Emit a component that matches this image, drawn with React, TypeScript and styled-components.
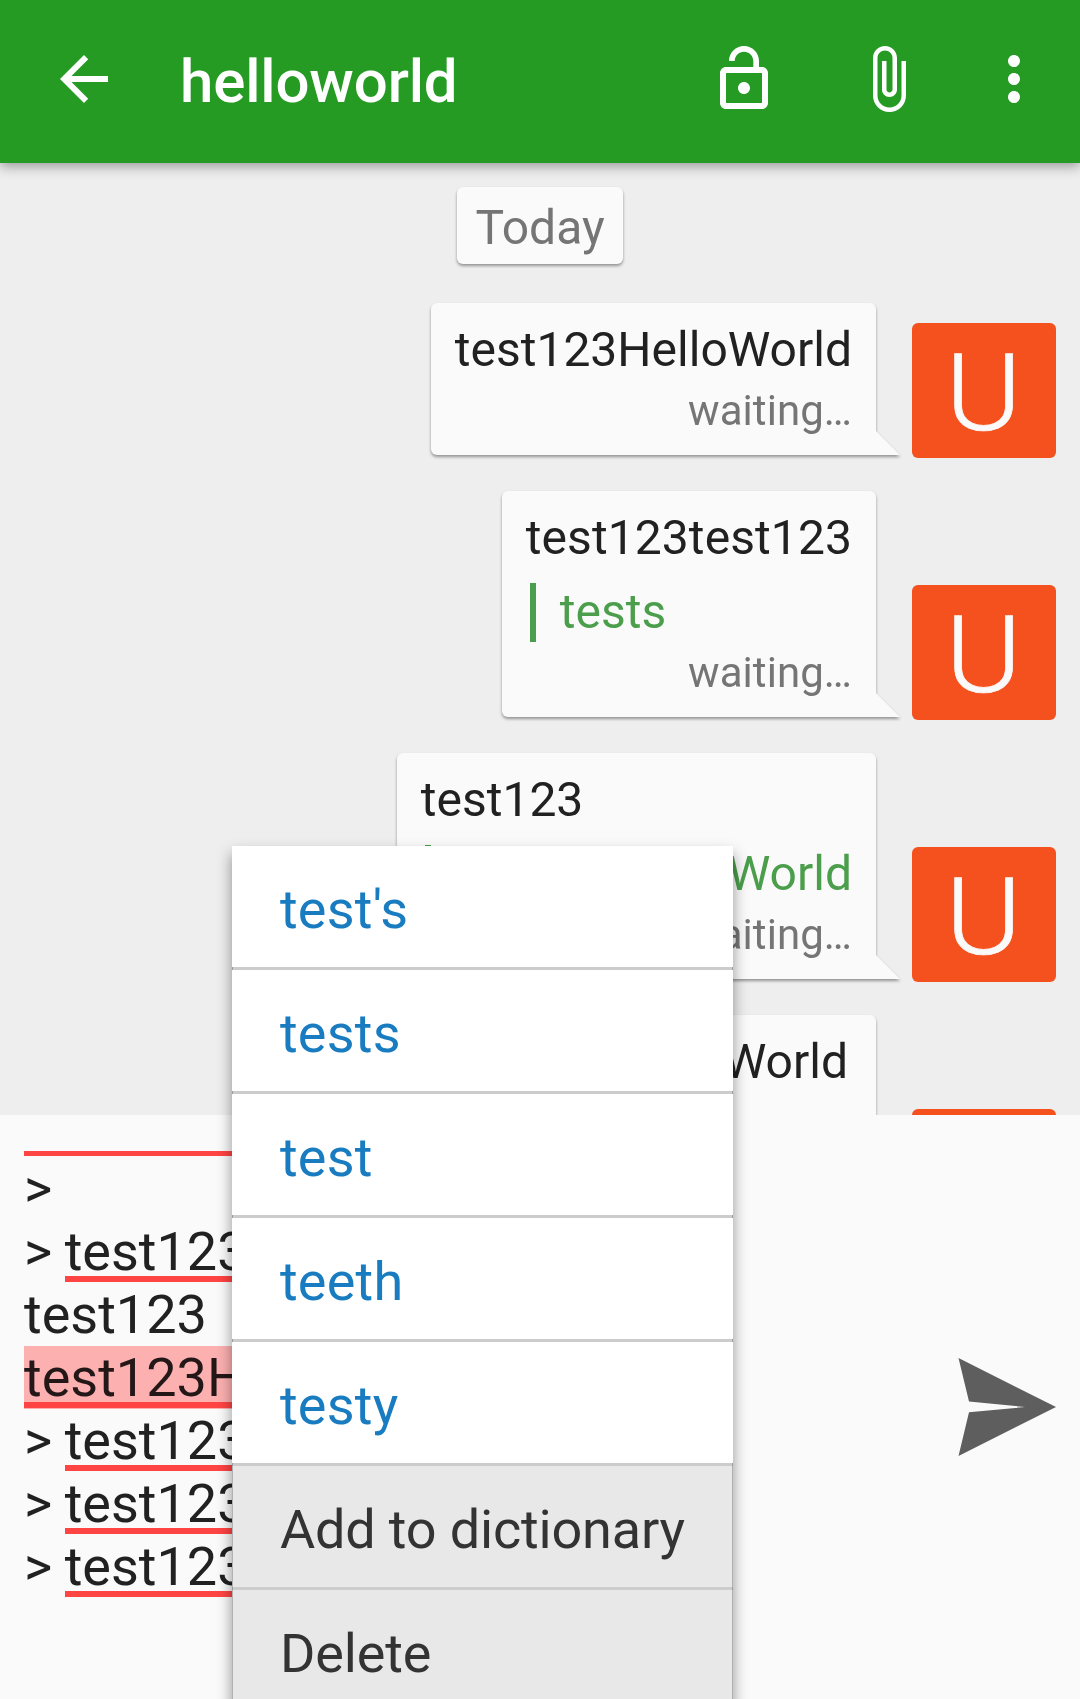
import React from "react";
import styled, { createGlobalStyle } from "styled-components";

const GlobalStyle = createGlobalStyle`
  *, *::before, *::after { box-sizing: border-box; }
  body {
    margin: 0;
    background: #fafafa;
    font-family: Roboto, "Liberation Sans", sans-serif;
  }
`;

const Screen = styled.div`
  position: relative;
  display: flex;
  flex-direction: column;
  width: 1080px;
  height: 1699px;
  overflow: hidden;
`;

const Toolbar = styled.header`
  position: relative;
  z-index: 1;
  flex: none;
  display: flex;
  align-items: center;
  height: 163px;
  padding: 0 30px 5px 48px;
  background: #259b24;
  color: #fff;
  box-shadow: 0 3px 12px rgba(0, 0, 0, 0.38);
`;

const Title = styled.h1`
  flex: 1;
  margin: 0 0 0 60px;
  font-size: 60px;
  line-height: 70px;
  font-weight: 500;
  letter-spacing: -0.15px;
  padding-top: 6px;
`;

const IconButton = styled.button<{ $gap?: number }>`
  display: flex;
  padding: 0;
  border: 0;
  margin-left: ${(p) => p.$gap ?? 0}px;
  background: none;
  color: inherit;
`;

const Conversation = styled.main`
  flex: none;
  display: flex;
  flex-direction: column;
  height: 952px;
  padding: 24px 24px 0;
  overflow: hidden;
  background: #eee;
`;

const DateChip = styled.div`
  flex: none;
  align-self: center;
  height: 77px;
  padding: 13px 18px 0;
  margin-bottom: 39px;
  border-radius: 6px;
  background: #fafafa;
  color: #757575;
  font-size: 48px;
  line-height: 56px;
  filter: drop-shadow(0 2px 1.5px rgba(0, 0, 0, 0.38));
`;

const MessageRow = styled.div`
  flex: none;
  display: flex;
  justify-content: flex-end;
  align-items: flex-end;
  margin-bottom: 36px;
`;

const Bubble = styled.div`
  position: relative;
  padding: 18px 24px 20px;
  margin-right: 36px;
  border-radius: 6px 6px 0 6px;
  background: #fafafa;
  filter: drop-shadow(0 2px 1.5px rgba(0, 0, 0, 0.38));

  &::after {
    content: "";
    position: absolute;
    right: -24px;
    bottom: 0;
    width: 24px;
    height: 24px;
    background: #fafafa;
    clip-path: polygon(0 0, 100% 100%, 0 100%);
  }
`;

const MessageText = styled.div<{ $trail?: number; $tracking?: number }>`
  height: 65px;
  padding-right: ${(p) => p.$trail ?? 0}px;
  letter-spacing: ${(p) => p.$tracking ?? 0}px;
  color: #212121;
  font-size: 48px;
  line-height: 57px;
`;

const Quote = styled.div`
  height: 59px;
  margin: 9px 0 6px 4px;
  padding-left: 24px;
  border-left: 6px solid #4b9e4b;
  color: #4b9e4b;
  font-size: 48px;
  line-height: 57px;
`;

const Status = styled.div`
  height: 49px;
  color: #757575;
  font-size: 42px;
  line-height: 49px;
  letter-spacing: 0.06px;
  text-align: right;
`;

const Avatar = styled.div`
  display: flex;
  justify-content: center;
  width: 144px;
  height: 135px;
  margin-bottom: -3px;
  border-radius: 6px;
  background: #f4511e;
  color: #fafafa;
  font-size: 108px;
  font-weight: 300;
  line-height: 141px;
`;

const Initial = styled.span`
  display: block;
  transform: scaleX(1.07);
  -webkit-text-stroke: 0.7px #fafafa;
`;

const Composer = styled.section`
  flex: 1;
  display: flex;
  align-items: center;
  justify-content: space-between;
  min-height: 0;
  padding: 0 24px;
  background: #fafafa;
`;

const Editor = styled.div`
  align-self: stretch;
  flex: 1;
  margin-top: 36px;
  overflow: hidden;
`;

const EditorText = styled.div`
  margin-top: -57px;
  color: #212121;
  font-size: 54px;
`;

const Line = styled.div`
  height: 63px;
  line-height: 63px;
  white-space: pre;
`;

const Prefix = styled.span`
  letter-spacing: -0.5px;
`;

const Misspelled = styled.span<{ $active?: boolean }>`
  display: inline-block;
  height: 63px;
  vertical-align: top;
  color: ${(p) => (p.$active ? "#231717" : "inherit")};
  background:
    linear-gradient(#ff4444, #ff4444) 0 56px / 100% 6px no-repeat
    ${(p) => (p.$active ? "#fcb0b0" : "transparent")};
`;

const Popup = styled.div`
  position: absolute;
  z-index: 2;
  left: 232px;
  top: 846px;
  width: 501px;
  height: 880px;
  background: #fff;
  box-shadow: 0 8px 14px rgba(0, 0, 0, 0.42);
`;

const PopupItem = styled.div<{ $action?: boolean }>`
  height: 121px;
  padding: 0 48px;
  font-size: 54px;
  line-height: 127px;
  white-space: nowrap;
  letter-spacing: ${(p) => (p.$action ? "-0.17px" : "0.2px")};
  color: ${(p) => (p.$action ? "#333" : "#197cc0")};
  background: ${(p) => (p.$action ? "#e8e8e8" : "#fff")};
  box-shadow: ${(p) => (p.$action ? "inset 1px 0 #b0b0b0, inset -1px 0 #b0b0b0" : "none")};
`;

const Divider = styled.div`
  height: 3px;
  background: #ccc;
  box-shadow: inset 1px 0 #9c9c9c, inset -1px 0 #9c9c9c;
`;

const Icon = ({ d }: { d: string }) => (
  <svg width="72" height="72" viewBox="0 0 24 24" fill="currentColor">
    <path d={d} />
  </svg>
);

const BACK = "M20 11H7.83l5.59-5.59L12 4l-8 8 8 8 1.41-1.41L7.83 13H20v-2z";
const LOCK_OPEN =
  "M12 17c1.1 0 2-.9 2-2s-.9-2-2-2-2 .9-2 2 .9 2 2 2zm6-9h-1V6c0-2.76-2.24-5-5-5S7 3.24 7 6h1.9c0-1.71 1.39-3.1 3.1-3.1 1.71 0 3.1 1.39 3.1 3.1v2H6c-1.1 0-2 .9-2 2v10c0 1.1.9 2 2 2h12c1.1 0 2-.9 2-2V10c0-1.1-.9-2-2-2zm0 12H6V10h12v10z";
const ATTACH =
  "M16.5 6v11.5c0 2.21-1.79 4-4 4s-4-1.79-4-4V5c0-1.38 1.12-2.5 2.5-2.5s2.5 1.12 2.5 2.5v10.5c0 .55-.45 1-1 1s-1-.45-1-1V6H10v9.5c0 1.38 1.12 2.5 2.5 2.5s2.5-1.12 2.5-2.5V5c0-2.21-1.79-4-4-4S7 2.79 7 5v12.5c0 3.04 2.46 5.5 5.5 5.5s5.5-2.46 5.5-5.5V6h-1.5z";
const MORE =
  "M12 8c1.1 0 2-.9 2-2s-.9-2-2-2-2 .9-2 2 .9 2 2 2zm0 2c-1.1 0-2 .9-2 2s.9 2 2 2 2-.9 2-2-.9-2-2-2zm0 6c-1.1 0-2 .9-2 2s.9 2 2 2 2-.9 2-2-.9-2-2-2z";

type Message = { text: string; quote?: string; trail?: number; tracking?: number };

const messages: Message[] = [
  { text: "test123HelloWorld" },
  { text: "test123test123", quote: "tests", tracking: 0.08 },
  { text: "test123", quote: "test123HelloWorld" },
  { text: "test123HelloWorld", quote: "test123", trail: 4 },
];

type DraftLine = { plain?: string; word?: string; active?: boolean };

const draft: DraftLine[] = [
  { word: "test123HelloWorld" },
  { plain: ">" },
  { plain: "> ", word: "test123HelloWorld" },
  { plain: "test123" },
  { word: "test123HelloWorld", active: true },
  { plain: "> ", word: "test123HelloWorld" },
  { plain: "> ", word: "test123HelloWorld" },
  { plain: "> ", word: "test123HelloWorld" },
];

const suggestions = ["test's", "tests", "test", "teeth", "testy"];
const actions = ["Add to dictionary", "Delete"];

export default function App() {
  return (
    <Screen>
      <GlobalStyle />
      <Toolbar>
        <IconButton aria-label="Back"><Icon d={BACK} /></IconButton>
        <Title>helloworld</Title>
        <IconButton aria-label="Encryption"><Icon d={LOCK_OPEN} /></IconButton>
        <IconButton aria-label="Attach" $gap={72}><Icon d={ATTACH} /></IconButton>
        <IconButton aria-label="More" $gap={54}><Icon d={MORE} /></IconButton>
      </Toolbar>

      <Conversation>
        <DateChip>Today</DateChip>
        {messages.map((m, i) => (
          <MessageRow key={i}>
            <Bubble>
              <MessageText $trail={m.trail} $tracking={m.tracking}>{m.text}</MessageText>
              {m.quote && <Quote>{m.quote}</Quote>}
              <Status>waiting…</Status>
            </Bubble>
            <Avatar><Initial>U</Initial></Avatar>
          </MessageRow>
        ))}
      </Conversation>

      <Composer>
        <Editor>
          <EditorText>
            {draft.map((l, i) => (
              <Line key={i}>
                {l.plain && (l.word ? <Prefix>{l.plain}</Prefix> : l.plain)}
                {l.word && <Misspelled $active={l.active}>{l.word}</Misspelled>}
              </Line>
            ))}
          </EditorText>
        </Editor>
        <IconButton aria-label="Send">
          <svg width="98" height="98" viewBox="0 0 98 98" fill="#5e5e5e">
            <path d="M.5 0 98 49 .5 98 11 54.2 67 49 11 43.6z" />
          </svg>
        </IconButton>
      </Composer>

      <Popup>
        {suggestions.map((s) => (
          <React.Fragment key={s}>
            <PopupItem>{s}</PopupItem>
            <Divider />
          </React.Fragment>
        ))}
        {actions.map((a) => (
          <React.Fragment key={a}>
            <PopupItem $action>{a}</PopupItem>
            <Divider />
          </React.Fragment>
        ))}
      </Popup>
    </Screen>
  );
}
